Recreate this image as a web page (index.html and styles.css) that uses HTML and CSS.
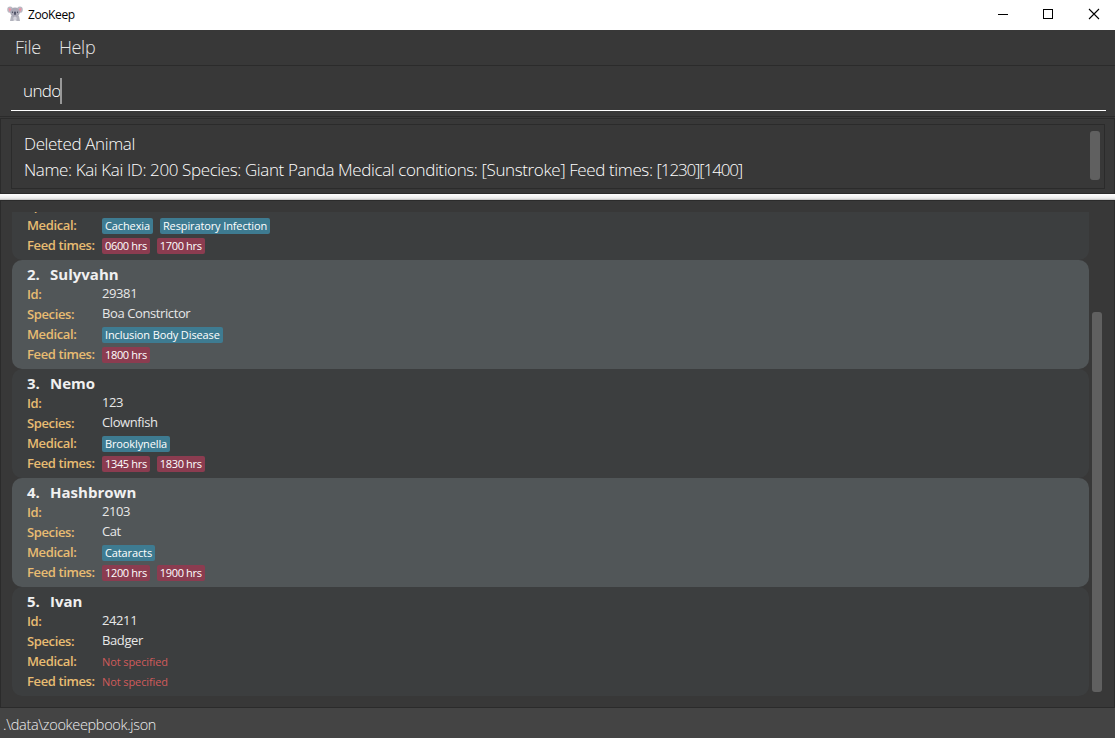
FILE: index.html
```html
<!DOCTYPE html>
<html lang="en">
<head>
<meta charset="utf-8">
<title>ZooKeep</title>
<link rel="stylesheet" href="styles.css">
</head>
<body>
<div class="window">
  <header class="titlebar">
    <svg class="logo" width="16" height="16" viewBox="0 0 16 16">
      <path d="M4 10h8l1 5h-3l-2-1-2 1H3z" fill="#b2b3bd"/>
      <ellipse cx="3.1" cy="3.7" rx="2.9" ry="3.1" fill="#bbb9c3"/>
      <ellipse cx="12.9" cy="3.7" rx="2.9" ry="3.1" fill="#bbb9c3"/>
      <path d="M1.4 2.2 4.2 2.8 3 6.2zM14.6 2.2 11.8 2.8 13 6.2z" fill="#f58a9d"/>
      <ellipse cx="8" cy="6.3" rx="4.8" ry="4.8" fill="#aaa9b6"/>
      <ellipse cx="8" cy="12.4" rx="1.7" ry="2" fill="#d4d3dc"/>
      <rect x="7.1" y="5.4" width="1.8" height="3.6" rx=".9" fill="#484b60"/>
      <circle cx="5.5" cy="6.2" r=".6" fill="#383b50"/>
      <circle cx="10.5" cy="6.2" r=".6" fill="#383b50"/>
    </svg>
    <span class="app-name">ZooKeep</span>
    <svg class="controls" width="104" height="12" viewBox="0 0 104 12" fill="none" stroke="#000">
      <path d="M0 6.5h10M45.5 1.5h9v9h-9z" shape-rendering="crispEdges"/>
      <path d="M91 1l10 10M101 1 91 11" stroke-width="1.1"/>
    </svg>
  </header>
  <nav class="menubar"><span class="menu-file">File</span><span class="menu-help">Help</span></nav>
  <div class="command"><div class="field"><span class="typed">undo</span><i class="caret"></i></div></div>
  <section class="result-pane">
    <div class="result">
      <div class="result-text"><p class="result-title">Deleted Animal</p><p class="result-line">Name: Kai Kai ID: 200 Species: Giant Panda Medical conditions: [Sunstroke] Feed times: <span class="times">[1230][1400]</span></p></div>
      <div class="thumb"></div>
    </div>
  </section>
  <div class="splitter"></div>
  <main class="list-pane">
    <div class="list">
      <article class="card partial">
        <dl>
          <dt>Species:</dt><dd></dd>
          <dt>Medical:</dt><dd><b class="tag">Cachexia</b><b class="tag">Respiratory Infection</b></dd>
          <dt>Feed times:</dt><dd><b class="tag time">0600 hrs</b><b class="tag time">1700 hrs</b></dd>
        </dl>
      </article>
      <article class="card alt">
        <h2><span>2.</span>Sulyvahn</h2>
        <dl>
          <dt>Id:</dt><dd>29381</dd>
          <dt>Species:</dt><dd>Boa Constrictor</dd>
          <dt>Medical:</dt><dd><b class="tag">Inclusion Body Disease</b></dd>
          <dt>Feed times:</dt><dd><b class="tag time">1800 hrs</b></dd>
        </dl>
      </article>
      <article class="card">
        <h2><span>3.</span>Nemo</h2>
        <dl>
          <dt>Id:</dt><dd>123</dd>
          <dt>Species:</dt><dd>Clownfish</dd>
          <dt>Medical:</dt><dd><b class="tag">Brooklynella</b></dd>
          <dt>Feed times:</dt><dd><b class="tag time">1345 hrs</b><b class="tag time">1830 hrs</b></dd>
        </dl>
      </article>
      <article class="card alt">
        <h2><span>4.</span>Hashbrown</h2>
        <dl>
          <dt>Id:</dt><dd>2103</dd>
          <dt>Species:</dt><dd>Cat</dd>
          <dt>Medical:</dt><dd><b class="tag">Cataracts</b></dd>
          <dt>Feed times:</dt><dd><b class="tag time">1200 hrs</b><b class="tag time">1900 hrs</b></dd>
        </dl>
      </article>
      <article class="card">
        <h2><span>5.</span>Ivan</h2>
        <dl>
          <dt>Id:</dt><dd>24211</dd>
          <dt>Species:</dt><dd>Badger</dd>
          <dt>Medical:</dt><dd><em class="none">Not specified</em></dd>
          <dt>Feed times:</dt><dd><em class="none">Not specified</em></dd>
        </dl>
      </article>
    </div>
    <div class="scroll"></div>
  </main>
  <footer class="status"><span>.\data\zookeepbook.json</span></footer>
</div>
</body>
</html>
```

FILE: styles.css
```css
* { box-sizing: border-box; margin: 0; padding: 0; }
body { background: #383838; font-family: "Open Sans", "Noto Sans", sans-serif; color: #fff; overflow: hidden; }
.window { width: 1115px; height: 738px; display: flex; flex-direction: column; }
.window > * { flex: none; }

.titlebar { height: 30px; background: #fff; color: #000; display: flex; align-items: center; padding: 0 13px 2px 7px; }
.app-name { font-size: 12px; line-height: 16px; margin: 2px 0 0 5px; letter-spacing: -.4px; }
.controls { margin-left: auto; }

.menubar { height: 36px; border-bottom: 1px solid #2b2b2b; display: flex; padding-left: 15px; gap: 18px; font-size: 18px; font-weight: 300; line-height: 35px; color: #e6e6e6; letter-spacing: -.3px; }

.command { height: 51px; border-bottom: 1px solid #2b2b2b; padding: 0 9px 0 11px; }
.field { height: 45px; border-bottom: 1px solid #fff; padding: 12px 0 0 12px; display: flex; align-items: flex-start; }
.typed { font-size: 17px; font-weight: 300; line-height: 26px; letter-spacing: -.65px; }
.caret { width: 2px; height: 26px; margin-left: -1px; background: #989898; }

.result-pane { height: 76px; margin-top: 1px; border: 1px solid #2b2b2b; padding: 5px 9px 0 10px; }
.result { height: 65px; border: 1px solid #2b2b2b; display: flex; justify-content: space-between; padding: 6px 4px 0 12px; }
.result-text { font-size: 17px; font-weight: 300; line-height: 26px; white-space: nowrap; }
.result-title { letter-spacing: -.36px; }
.result-line { letter-spacing: -.39px; }
.times { letter-spacing: -1.15px; }
.thumb { width: 10px; height: 49px; border-radius: 3px; background: #606060; }

.splitter { height: 6px; background: linear-gradient(#fff, #ececec 70%, #bdbdbd); }

.list-pane { height: 508px; border: 1px solid #2b2b2b; padding: 11px 12px 11px 11px; display: flex; }
.list { width: 1077px; height: 484px; overflow: hidden; display: flex; flex-direction: column; justify-content: flex-end; }
.scroll { width: 10px; height: 380px; margin: 100px 0 0 3px; border-radius: 3px; background: #606060; }

.card { flex: none; height: 109px; border-radius: 10px; background: #3c3e3f; padding: 4px 15px 0; }
.card.alt { background: #515658; }
.card.partial { height: 65px; padding-top: 0; }
.card h2 { height: 20px; font-size: 15px; font-weight: 700; line-height: 20px; color: #f0f0f0; display: flex; letter-spacing: .02px; }
.card h2 span { width: 23px; }
.card dl { display: grid; grid-template-columns: 75px 1fr; grid-auto-rows: 20px; white-space: nowrap; }
.card dt { font-size: 13px; font-weight: 600; line-height: 21px; color: #e8bc72; letter-spacing: -.38px; }
.card dd { font-size: 13px; line-height: 19px; color: #e8e8e8; display: flex; gap: 7px; letter-spacing: -.4px; }
.tag { height: 16px; margin-top: 3px; padding: 0 3px; border-radius: 2px; background: #3e7b91; color: #fff; font-size: 11px; font-weight: 400; line-height: 16px; letter-spacing: -.12px; }
.tag.time { background: #8b3c50; letter-spacing: -.34px; }
.none { font-size: 11px; font-style: normal; font-weight: 500; line-height: 22px; color: #d05b5b; letter-spacing: -.1px; }

.status { height: 30px; background: #444; font-size: 14.5px; font-weight: 300; line-height: 33px; padding-left: 3px; color: #eee; letter-spacing: -.33px; }
```
